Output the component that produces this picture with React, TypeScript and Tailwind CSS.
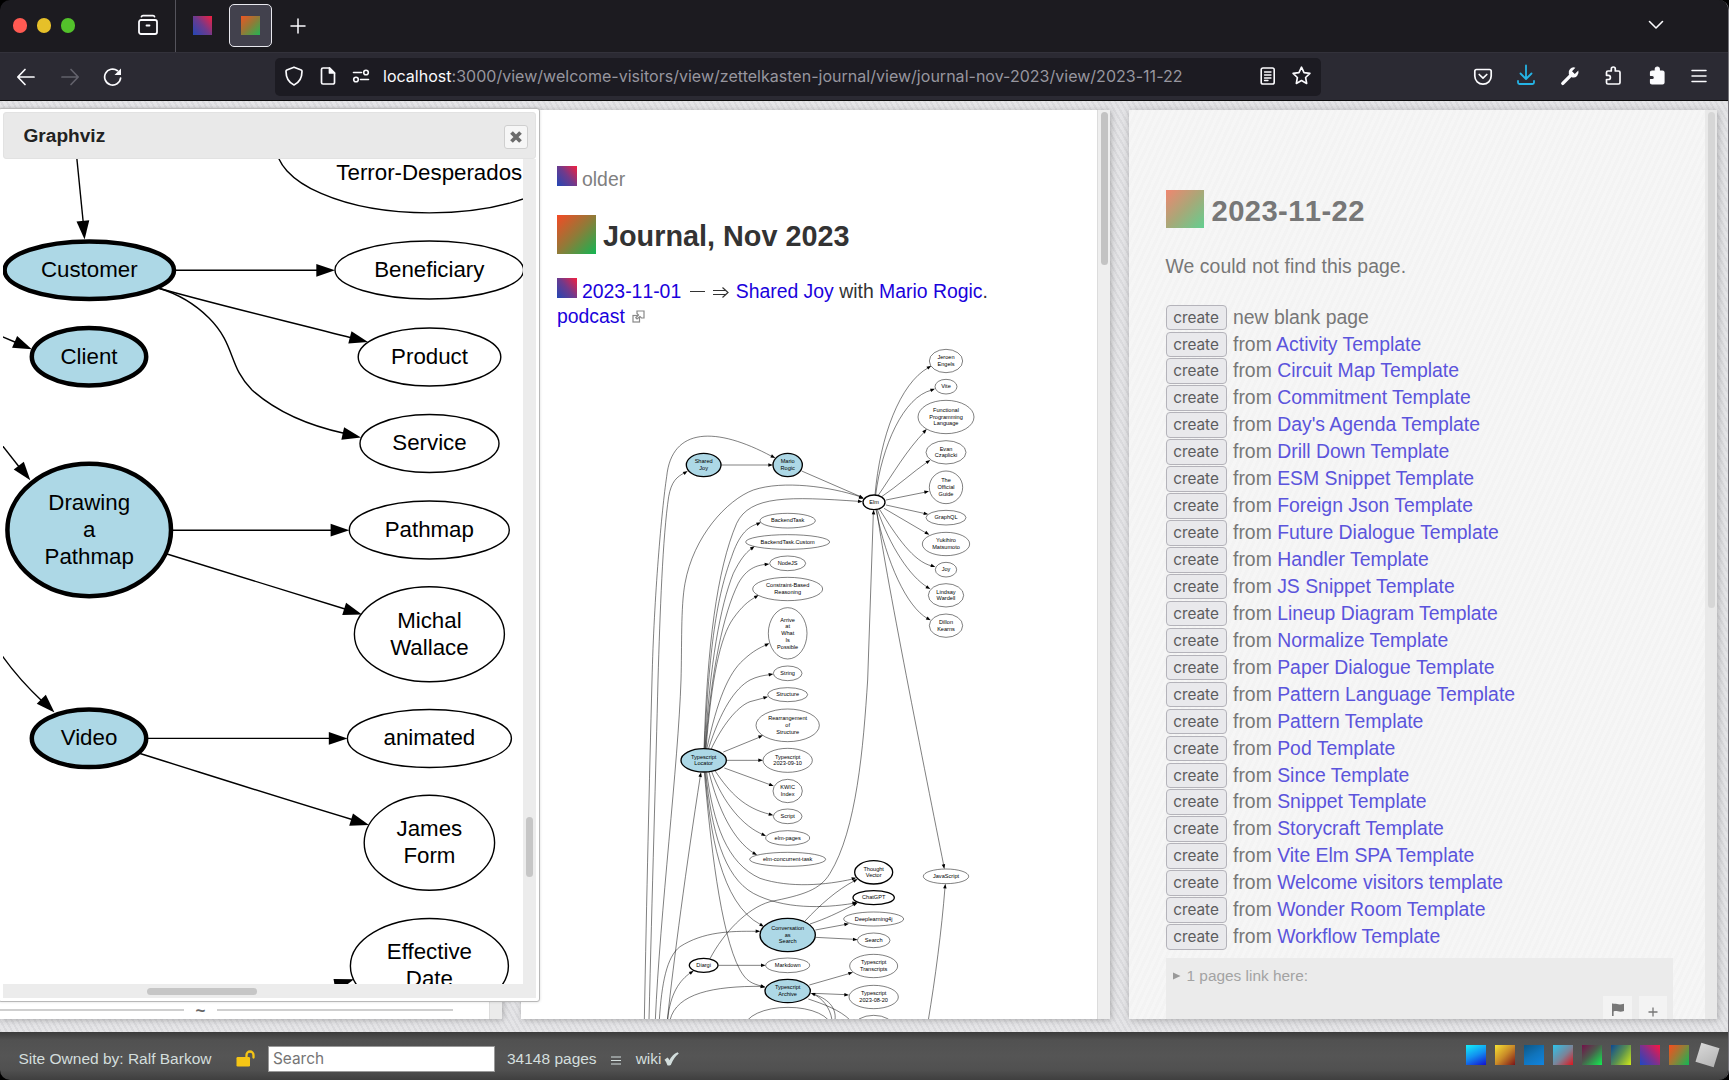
import React from "react";

const LINK = "text-[#1a02dc]";

type Pt = [number, number];

/* Arrow head polygon whose point is at `tip`, coming from the direction of `from`. */
function head(from: Pt, tip: Pt, len: number, half: number) {
  const dx = tip[0] - from[0];
  const dy = tip[1] - from[1];
  const m = Math.hypot(dx, dy) || 1;
  const ux = dx / m;
  const uy = dy / m;
  const bx = tip[0] - ux * len;
  const by = tip[1] - uy * len;
  return `${tip[0]},${tip[1]} ${bx - uy * half},${by + ux * half} ${bx + uy * half},${by - ux * half}`;
}

function Edge({ d, from, tip, len, half, w }: { d: string; from: Pt; tip: Pt; len: number; half: number; w: number }) {
  return (
    <g>
      <path d={d} fill="none" stroke="#000" strokeWidth={w} />
      <polygon points={head(from, tip, len, half)} fill="#000" />
    </g>
  );
}

type Node = { x: number; y: number; rx: number; ry: number; t: string; kind?: "blue" | "bold" };

function Nodes({ nodes, font, line, thin, thick }: { nodes: Node[]; font: number; line: number; thin: number; thick: number }) {
  return (
    <>
      {nodes.map((n, i) => {
        const lines = n.t.split("|");
        const first = n.y - ((lines.length - 1) * line) / 2 + font * 0.31;
        return (
          <g key={i}>
            <ellipse
              cx={n.x}
              cy={n.y}
              rx={n.rx}
              ry={n.ry}
              fill={n.kind === "blue" ? "#add8e6" : "#fff"}
              stroke="#000"
              strokeWidth={n.kind ? thick : thin}
            />
            {lines.map((l, k) => (
              <text key={k} x={n.x} y={first + k * line} textAnchor="middle" fontSize={font} fill="#000">
                {l}
              </text>
            ))}
          </g>
        );
      })}
    </>
  );
}

const bigNodes: Node[] = [
  { x: 429.3, y: 146.5, rx: 153, ry: 66.4, t: "||Terror-Desperados" },
  { x: 89.3, y: 270.2, rx: 84.7, ry: 28.8, t: "Customer", kind: "blue" },
  { x: 429.3, y: 270, rx: 94.3, ry: 29, t: "Beneficiary" },
  { x: 89, y: 356.7, rx: 57.2, ry: 28.8, t: "Client", kind: "blue" },
  { x: 429.5, y: 357, rx: 71.3, ry: 29, t: "Product" },
  { x: 429.5, y: 443.5, rx: 69.5, ry: 29, t: "Service" },
  { x: 89.2, y: 530, rx: 81.8, ry: 66.2, t: "Drawing|a|Pathmap", kind: "blue" },
  { x: 429.3, y: 530, rx: 80, ry: 29, t: "Pathmap" },
  { x: 429.4, y: 634.2, rx: 75, ry: 47.5, t: "Michal|Wallace" },
  { x: 89, y: 738.3, rx: 57.2, ry: 28.8, t: "Video", kind: "blue" },
  { x: 429.4, y: 738.5, rx: 82, ry: 29, t: "animated" },
  { x: 429.4, y: 842.8, rx: 65.2, ry: 47.5, t: "James|Form" },
  { x: 429.4, y: 966, rx: 79, ry: 47.5, t: "Effective|Date" },
];

const bigEdges: [string, Pt, Pt][] = [
  ["M76 150L83.2 222", [81, 200], [84.6, 239.5]],
  ["M172 270.3H318", [300, 270.3], [335, 270.3]],
  ["M158 288C210 303 290 322 352 338", [300, 324.5], [368, 342]],
  ["M158 288C182 295 199 308 209 318C236 345 228 366 252 390C280 415 315 427 345 433.5", [320, 428.5], [361, 437.5]],
  ["M2 336.5L16 342.5", [2, 336.5], [31.8, 349.3]],
  ["M2 445L20 468", [5, 448], [30.3, 480.3]],
  ["M170 530.2H333", [300, 530.2], [349.3, 530.2]],
  ["M167 554L345 609", [300, 595], [362, 614.5]],
  ["M2 655.5C15 674 28 688 43 702", [30, 688], [54.5, 712.5]],
  ["M146 738.4H331", [300, 738.4], [347.5, 738.4]],
  ["M140 753.5C215 777 290 801 352 819.5", [300, 804], [369, 825]],
];

function BigGraph() {
  return (
    <svg className="block shrink-0" width="520" height="826" viewBox="3 159 520 826" fontFamily="Liberation Sans, Arial, sans-serif">
      {bigEdges.map(([d, f, t], i) => (
        <Edge key={i} d={d} from={f} tip={t} len={18.7} half={6.4} w={1.4} />
      ))}
      <polygon points="333.5,979 354,979.3 336,993" fill="#000" />
      <Nodes nodes={bigNodes} font={22.3} line={27} thin={1.4} thick={4.5} />
    </svg>
  );
}

const smallNodes: Node[] = [
  { x: 948, y: 93, rx: 50, ry: 35, t: "Jeroen|Engels" },
  { x: 948, y: 170, rx: 33, ry: 22, t: "Vite" },
  { x: 948, y: 261, rx: 84, ry: 50, t: "Functional|Programming|Language" },
  { x: 948, y: 367, rx: 60, ry: 35, t: "Evan|Czaplicki" },
  { x: 948, y: 472, rx: 50, ry: 49, t: "The|Official|Guide" },
  { x: 948, y: 563, rx: 60, ry: 22, t: "GraphQL" },
  { x: 948, y: 642, rx: 71, ry: 35, t: "Yukihiro|Matsumoto" },
  { x: 948, y: 719, rx: 32, ry: 22, t: "Joy" },
  { x: 948, y: 796, rx: 53, ry: 35, t: "Lindsay|Wardell" },
  { x: 948, y: 887, rx: 50, ry: 35, t: "Dillon|Kearns" },
  { x: 732, y: 517, rx: 33, ry: 22, t: "Elm", kind: "bold" },
  { x: 221, y: 405, rx: 52, ry: 35, t: "Shared|Joy", kind: "blue" },
  { x: 473, y: 405, rx: 44, ry: 35, t: "Mario|Rogic", kind: "blue" },
  { x: 473, y: 572, rx: 83, ry: 22, t: "BackendTask" },
  { x: 473, y: 636, rx: 126, ry: 22, t: "BackendTask.Custom" },
  { x: 473, y: 700, rx: 54, ry: 22, t: "NodeJS" },
  { x: 473, y: 777, rx: 105, ry: 35, t: "Constraint-Based|Reasoning" },
  { x: 473, y: 910, rx: 58, ry: 77, t: "Arrive|at|What|Is|Possible" },
  { x: 473, y: 1030, rx: 43, ry: 22, t: "String" },
  { x: 473, y: 1094, rx: 60, ry: 21, t: "Structure" },
  { x: 473, y: 1186, rx: 95, ry: 49, t: "Rearrangement|of|Structure" },
  { x: 473, y: 1291, rx: 74, ry: 36, t: "Typescript|2023-09-10" },
  { x: 473, y: 1383, rx: 44, ry: 35, t: "KWIC|Index" },
  { x: 473, y: 1459, rx: 43, ry: 22, t: "Script" },
  { x: 473, y: 1524, rx: 66, ry: 22, t: "elm-pages" },
  { x: 473, y: 1588, rx: 114, ry: 21, t: "elm-concurrent-task" },
  { x: 221, y: 1291, rx: 68, ry: 35, t: "Typescript|Locator", kind: "blue" },
  { x: 731, y: 1627, rx: 57, ry: 35, t: "Thought|Vector", kind: "bold" },
  { x: 731, y: 1703, rx: 62, ry: 21, t: "ChatGPT", kind: "bold" },
  { x: 731, y: 1767, rx: 90, ry: 21, t: "Deeplearning4j" },
  { x: 731, y: 1831, rx: 49, ry: 22, t: "Search" },
  { x: 948, y: 1639, rx: 68, ry: 22, t: "JavaScript" },
  { x: 473, y: 1815, rx: 83, ry: 50, t: "Conversation|as|Search", kind: "blue" },
  { x: 221, y: 1906, rx: 43, ry: 21, t: "Diargi", kind: "bold" },
  { x: 473, y: 1906, rx: 66, ry: 22, t: "Markdown" },
  { x: 473, y: 1983, rx: 68, ry: 35, t: "Typescript|Archive", kind: "blue" },
  { x: 731, y: 1908, rx: 72, ry: 35, t: "Typescript|Transcripts" },
  { x: 731, y: 2001, rx: 74, ry: 35, t: "Typescript|2023-08-20" },
  { x: 474, y: 2092, rx: 130, ry: 60, t: "" },
  { x: 731, y: 2091, rx: 60, ry: 35, t: "" },
];

const smallEdges: [string, Pt, Pt][] = [
  ["M43 2070C50 1700 58 1350 66 1050C72 800 95 540 110 440C125 290 260 290 425 379", [400, 366], [436, 384]],
  ["M57 2070C66 1700 78 1300 84 1050C90 850 98 620 116 500C124 455 140 440 165 428", [150, 437], [173, 423]],
  ["M76 2070C90 1750 145 1300 153 1050C156 950 152 830 165 760C190 620 290 510 370 480C460 450 600 470 690 500", [660, 492], [701, 506]],
  ["M222 1258C232 950 260 720 320 580C360 495 480 500 686 514", [650, 511], [698, 515]],
  ["M223 1258C238 950 260 800 305 680C325 620 350 590 385 581", [370, 588], [393, 577]],
  ["M225 1258C240 1000 270 830 310 730C330 690 345 670 364 656", [350, 666], [374, 649]],
  ["M226 1258C244 1020 280 850 325 760C350 715 380 706 408 703", [390, 705], [418, 702]],
  ["M228 1258C244 1050 270 920 310 865C335 830 355 813 377 801", [360, 811], [386, 795]],
  ["M230 1258C262 1110 295 1030 340 990C370 962 390 953 410 944", [390, 954], [418, 940]],
  ["M235 1258C272 1140 315 1075 360 1050C380 1040 400 1036 420 1034", [400, 1037], [430, 1032]],
  ["M243 1258C275 1190 320 1130 360 1115L405 1103", [385, 1108], [414, 1100]],
  ["M280 1266L390 1221", [350, 1237], [399, 1216]],
  ["M290 1291H388", [350, 1291], [399, 1291]],
  ["M283 1314L420 1364", [380, 1349], [431, 1368]],
  ["M255 1322C300 1390 345 1435 420 1453", [395, 1446], [430, 1456]],
  ["M245 1325C280 1420 340 1490 400 1514", [380, 1505], [408, 1518]],
  ["M237 1326C265 1440 310 1530 372 1570", [355, 1560], [381, 1575]],
  ["M230 1327C250 1480 290 1600 390 1645C480 1675 590 1665 668 1647", [645, 1652], [679, 1643]],
  ["M227 1327C245 1500 280 1640 370 1690C460 1738 580 1735 670 1720", [645, 1724], [681, 1717]],
  ["M225 1327C240 1500 270 1720 392 1784", [372, 1772], [402, 1790]],
  ["M223 1327C240 1520 270 1810 330 1920C350 1955 365 1960 396 1969", [375, 1962], [406, 1972]],
  ["M112 2070C130 1900 170 1600 211 1338", [205, 1370], [213, 1327]],
  ["M88 2070C95 1960 110 1880 150 1850C220 1805 300 1803 380 1804", [350, 1803], [391, 1804]],
  ["M113 2070C120 1990 150 1950 182 1928", [165, 1940], [191, 1922]],
  ["M120 2070C140 1990 250 1968 396 1969", [360, 1967], [406, 1971]],
  ["M240 1886C280 1810 350 1735 420 1715C520 1695 570 1680 600 1630C680 1500 700 1250 713 1050L730 550", [729, 590], [731, 539]],
  ["M525 1773C570 1725 620 1680 674 1652", [655, 1662], [683, 1647]],
  ["M540 1782C590 1765 620 1750 672 1724", [650, 1734], [683, 1718]],
  ["M556 1800L648 1783", [600, 1792], [657, 1781]],
  ["M556 1822L674 1828", [600, 1824], [683, 1829]],
  ["M265 1906H398", [350, 1906], [407, 1906]],
  ["M538 1965L660 1930", [600, 1948], [669, 1927]],
  ["M550 1990L648 1994", [600, 1992], [657, 1995]],
  ["M615 2070C620 2030 590 2005 552 1993", [570, 2000], [542, 1989]],
  ["M740 538C760 700 890 1350 941 1605", [930, 1550], [943, 1617]],
  ["M895 2070C915 1950 935 1800 945 1672", [942, 1700], [946, 1661]],
  ["M515 423L692 500", [640, 477], [701, 505]],
  ["M273 405H418", [380, 405], [429, 405]],
  ["M735 495C750 320 810 160 895 113", [875, 125], [904, 107]],
  ["M737 495C755 350 820 200 906 180", [885, 187], [915, 176]],
  ["M744 497C790 430 830 360 884 305", [865, 325], [890, 297]],
  ["M755 500C800 470 850 425 892 396", [870, 411], [901, 390]],
  ["M768 510L888 486", [830, 497], [897, 484]],
  ["M768 525L886 551", [830, 539], [895, 553]],
  ["M762 535L890 610", [840, 580], [898, 614]],
  ["M748 537C800 620 850 695 906 708", [885, 700], [916, 711]],
  ["M742 538C780 650 840 740 893 772", [875, 762], [901, 777]],
  ["M738 539C770 700 830 830 893 866", [875, 855], [902, 871]],
];

function SmallGraph() {
  return (
    <svg className="ml-[109px] block" width="380" height="690" viewBox="0 0 1140 2070" fontFamily="Liberation Sans, Arial, sans-serif">
      {smallEdges.map(([d, f, t], i) => (
        <Edge key={i} d={d} from={f} tip={t} len={14} half={5.2} w={1.5} />
      ))}
      <path d="M535 2007C580 2022 630 2040 660 2070M606 2070C600 2030 575 2005 552 1993" fill="none" stroke="#000" strokeWidth="1.5" />
      <Nodes nodes={smallNodes} font={16.8} line={20.2} thin={1.5} thick={4} />
    </svg>
  );
}

function Gradient({ className }: { className: string }) {
  return <span className={`inline-block shrink-0 ${className}`} />;
}
const BLUE_RED = "bg-[linear-gradient(50deg,#2347b5,#6f3a8c_50%,#f41f3f)]";
const RED_GREEN = "bg-[linear-gradient(135deg,#f54a25,#8f7b38_50%,#12b653)]";

function TabStrip() {
  return (
    <div className="flex h-[52px] items-center bg-[#1c1b20] text-[#fbfbfe]">
      <div className="-mt-[2px] ml-[13px] flex gap-[10px]">
        <span className="h-[15px] w-[14px] rounded-full bg-[#ff5a52]" />
        <span className="h-[15px] w-[14px] rounded-full bg-[#e6c029]" />
        <span className="h-[15px] w-[14px] rounded-full bg-[#53c22b]" />
      </div>
      <svg className="-mt-[2px] ml-[62px]" width="22" height="22" viewBox="0 0 22 22" fill="none" stroke="currentColor" strokeWidth="1.8" strokeLinecap="round" strokeLinejoin="round">
        <path d="M4.5 2.6C4.7 1.8 5 1.6 6 1.6H16C17 1.6 17.300 1.800 17.500 2.600" />
        <rect x="2" y="6" width="18" height="14" rx="2" />
        <path d="M9.500 11.500H12.500" />
      </svg>
      <span className="ml-[16px] h-full w-px bg-[#55545c]" />
      <Gradient className={`-mt-[2px] ml-[17px] h-[19px] w-[19px] ${BLUE_RED}`} />
      <div className="-mt-[2px] ml-[17px] flex h-[43px] w-[43px] items-center justify-center rounded-[5px] border border-[#e8e8ee] bg-[#42414d]">
        <Gradient className="h-[19px] w-[19px] bg-[linear-gradient(135deg,#ee5522,#8f7b38_50%,#22b653)]" />
      </div>
      <svg className="ml-[18px]" width="16" height="16" viewBox="0 0 16 16" stroke="currentColor" strokeWidth="1.500" strokeLinecap="round">
        <path d="M8 1V15M1 8H15" />
      </svg>
      <svg className="-mt-[2px] mr-[64px] ml-auto" width="16" height="10" viewBox="0 0 16 10" fill="none" stroke="currentColor" strokeWidth="1.600" strokeLinecap="round" strokeLinejoin="round">
        <path d="M1.500 1.500L8 8L14.500 1.500" />
      </svg>
    </div>
  );
}

const PUZZLE = "M6 7H9.300V5A2 2 0 0 1 13.300 5V7H16.500A1.500 1.500 0 0 1 18 8.500V18.500A1.500 1.500 0 0 1 16.500 20H6A1.500 1.500 0 0 1 4.500 18.500V15.500H6.300A2 2 0 0 0 6.300 11.300H4.500V8.500A1.500 1.500 0 0 1 6 7Z";

function Toolbar() {
  return (
    <div className="flex h-12 items-center border-t border-[#33323b] bg-[#2b2a33] text-[#fbfbfe]">
      <svg className="ml-[16px]" width="20" height="20" viewBox="0 0 20 20" fill="none" stroke="currentColor" strokeWidth="1.700" strokeLinecap="round" strokeLinejoin="round">
        <path d="M18 10H2M9 2.500L1.800 10L9 17.500" />
      </svg>
      <svg className="ml-[24px] text-[#62616b]" width="20" height="20" viewBox="0 0 20 20" fill="none" stroke="currentColor" strokeWidth="1.700" strokeLinecap="round" strokeLinejoin="round">
        <path d="M2 10H18M11 2.500L18.200 10L11 17.500" />
      </svg>
      <svg className="ml-[23px]" width="20" height="20" viewBox="0 0 20 20" fill="none" stroke="currentColor" strokeWidth="1.700" strokeLinecap="round">
        <path d="M17.600 11A8 8 0 1 1 14.500 3.700" />
        <path d="M18 1.500V8H11.500Z" fill="currentColor" stroke="none" />
      </svg>
      <div className="ml-[152px] flex h-[38px] w-[1046px] shrink-0 items-center rounded-[5px] bg-[#1c1b22]">
        <svg className="-mt-[2px] ml-[9px] shrink-0" width="20" height="20" viewBox="0 0 20 20" fill="none" stroke="currentColor" strokeWidth="1.700" strokeLinejoin="round">
          <path d="M10 1.200L17.200 4Q18 4.300 18 5.300C18 12 15.500 16.500 10 19C4.500 16.500 2 12 2 5.300Q2 4.300 2.800 4Z" />
        </svg>
        <svg className="-mt-[2px] ml-[15px] shrink-0" width="18" height="20" viewBox="0 0 18 20" fill="none" stroke="currentColor" strokeWidth="1.700" strokeLinejoin="round">
          <path d="M4 2H10.500L15.500 7V16.500A1.500 1.500 0 0 1 14 18H4A1.500 1.500 0 0 1 2.500 16.500V3.500A1.500 1.500 0 0 1 4 2Z" />
          <path d="M10.500 2V7H15.500Z" fill="currentColor" />
        </svg>
        <svg className="-mt-[2px] ml-[15px] shrink-0" width="18" height="16" viewBox="0 0 18 16" fill="none" stroke="currentColor" strokeWidth="1.600" strokeLinecap="round">
          <path d="M1.500 4.500H9.500M8.500 11.500H16.500" />
          <circle cx="14" cy="4.500" r="2.300" />
          <circle cx="4" cy="11.500" r="2.300" />
        </svg>
        <span className="-mt-[2px] ml-[13px] font-['Inter',sans-serif] text-[16px] tracking-[0.020px] whitespace-nowrap text-[#97969f]">
          <span className="text-[#fbfbfe]">localhost</span>:3000/view/welcome-visitors/view/zettelkasten-journal/view/journal-nov-2023/view/2023-11-22
        </span>
        <svg className="-mt-[2px] ml-auto shrink-0" width="18" height="20" viewBox="0 0 18 20" fill="none" stroke="currentColor" strokeWidth="1.600" strokeLinecap="round">
          <rect x="2.200" y="2" width="13" height="16" rx="1.800" />
          <path d="M5.500 6H12M5.500 9H12M5.500 12H12M5.500 14.500H9" strokeWidth="1.300" />
        </svg>
        <svg className="-mt-[2px] mr-[9px] ml-[14px] shrink-0" width="21" height="21" viewBox="0 0 24 24" fill="none" stroke="currentColor" strokeWidth="1.900" strokeLinejoin="round">
          <path d="M12 2.500L14.900 8.700L21.600 9.600L16.700 14.300L17.900 21.100L12 17.800L6.100 21.100L7.300 14.300L2.400 9.600L9.100 8.700Z" />
        </svg>
      </div>
      <svg className="ml-[152px]" width="20" height="20" viewBox="0 0 20 20" fill="none" stroke="currentColor" strokeWidth="1.700" strokeLinecap="round" strokeLinejoin="round">
        <path d="M3.500 2.500H16.500Q18.200 2.500 18.200 4.200V9A8.200 8.200 0 0 1 1.800 9V4.200Q1.800 2.500 3.500 2.500Z" />
        <path d="M6.200 7.500L10 11.200L13.800 7.500" />
      </svg>
      <svg className="-mt-[3px] ml-[23px] text-[#25b4e6]" width="20" height="22" viewBox="0 0 20 22" fill="none" stroke="currentColor" strokeWidth="1.800" strokeLinecap="round" strokeLinejoin="round">
        <path d="M10 1.500V14.500M4.500 9.500L10 15L15.500 9.500M2 17V18.500Q2 20 3.500 20H16.500Q18 20 18 18.500V17" />
      </svg>
      <svg className="-mt-[2px] ml-[24px]" width="20" height="20" viewBox="0 0 20 20">
        <path d="M2.800 17.400L10.800 9.400" stroke="currentColor" strokeWidth="3.400" strokeLinecap="round" />
        <path d="M18.300 4.600L14.800 8L12 5.200L15.400 1.700A5.200 5.200 0 0 0 8.800 8.300L11.700 11.200A5.200 5.200 0 0 0 18.300 4.600Z" fill="currentColor" />
      </svg>
      <svg className="-mt-[4px] ml-[22px]" width="22" height="22" viewBox="0 0 22 22" fill="none" stroke="currentColor" strokeWidth="1.700" strokeLinejoin="round">
        <path d={PUZZLE} />
      </svg>
      <svg className="-mt-[4px] ml-[22px]" width="22" height="22" viewBox="0 0 22 22" fill="currentColor" stroke="currentColor" strokeWidth="1.200" strokeLinejoin="round">
        <path d={PUZZLE} />
      </svg>
      <svg className="-mt-[2px] ml-[23px]" width="16" height="14" viewBox="0 0 16 14" stroke="currentColor" strokeWidth="1.500" strokeLinecap="round">
        <path d="M1 1.500H15M1 7H15M1 12.500H15" />
      </svg>
    </div>
  );
}

function GraphvizDialog() {
  return (
    <div className="absolute top-[7px] left-[-2px] flex h-[894px] w-[542px] flex-col rounded-[3px] border border-[#b8b8b8] bg-white pt-[3px] pr-[3px] pb-[3px] pl-[4px] shadow-[0_0_3px_rgba(0,0,0,0.15)]">
      <div className="flex h-[47px] shrink-0 items-center justify-between rounded-[3px] border border-[#e2e2e2] bg-[#e9e9e9] pt-[2px] pr-[7px] pl-[19.500px]">
        <span className="text-[19.100px] font-bold text-[#222]">Graphviz</span>
        <span className="flex h-[24px] w-[24px] items-center justify-center rounded-[3px] border border-[#cfcfcf] bg-[#f6f6f6]">
          <svg width="12" height="12" viewBox="0 0 12 12" stroke="#6b6b6b" strokeWidth="3.800">
            <path d="M1.500 1.500L10.500 10.500M10.500 1.500L1.500 10.500" />
          </svg>
        </span>
      </div>
      <div className="flex h-[826px] overflow-hidden">
        <BigGraph />
        <div className="flex w-[14px] justify-center bg-[#ececec] pt-[658px]">
          <span className="h-[60px] w-[7px] rounded-full bg-[#c6c6c6]" />
        </div>
      </div>
      <div className="flex h-[14px] items-center bg-[#ececec] pl-[144px]">
        <span className="h-[7px] w-[110px] rounded-full bg-[#c6c6c6]" />
      </div>
    </div>
  );
}

function JournalPage() {
  return (
    <section className="flex h-[909px] w-[589px] overflow-hidden bg-white shadow-[1px_1px_6px_rgba(0,0,0,0.25)]">
      <div className="w-[576px] overflow-hidden pl-[36px] text-[19.400px] text-[#333]">
        <div className="mt-[55px] flex h-[27px] items-start">
          <Gradient className={`mt-px h-[20px] w-[20px] ${BLUE_RED}`} />
          <span className="ml-[5px] leading-[29px] text-[#808080]">older</span>
        </div>
        <div className="mt-[23px] flex h-[39px] items-start">
          <Gradient className={`h-[39px] w-[39px] ${RED_GREEN}`} />
          <h1 className="ml-[7px] text-[28.800px] leading-[43px] font-bold">Journal, Nov 2023</h1>
        </div>
        <div className="mt-[24px] flex h-[25px] items-start whitespace-pre">
          <Gradient className={`h-[20px] w-[20px] ${BLUE_RED}`} />
          <p className="ml-[5px] leading-[27px]">
            <a className={`[font-kerning:none] ${LINK}`}>2023-11-01</a>
            <span className="mr-[5px] ml-[6.500px] inline-block w-[19px] text-center">
              <span className="inline-block h-[1.500px] w-[15px] bg-[#333] align-[6px]" />
            </span>
            <svg className="mr-[6px] inline-block align-[-1px]" width="18" height="13" viewBox="0 0 18 13" fill="none" stroke="#333" strokeWidth="1.200">
              <path d="M1 4.500H13.500M1 8.500H13.500M10.500 1.500L16 6.500L10.500 11.500" />
            </svg>
            <a className={LINK}>Shared Joy</a> with <a className={LINK}>Mario Rogic</a>.
          </p>
        </div>
        <p className="flex h-[27px] items-center leading-[27px]">
          <a className={LINK}>podcast</a>
          <svg className="ml-[7px]" width="13" height="13" viewBox="0 0 13 13" fill="#fff" stroke="#888" strokeWidth="1.200">
            <rect x="1" y="5.500" width="6.500" height="6.500" />
            <path d="M5 1H12V8H9.500L8 6.500L5 9L3.800 7.800L6.500 5L5 3.500Z" />
          </svg>
        </p>
        <div className="-ml-[36px]">
          <SmallGraph />
        </div>
      </div>
      <div className="flex w-[13px] justify-center border-l border-[#dcdcdc] bg-[#eeeeee] pt-[2px]">
        <span className="h-[153px] w-[7px] rounded-full bg-[#c3c3c3]" />
      </div>
    </section>
  );
}

const templates = [
  "Activity Template",
  "Circuit Map Template",
  "Commitment Template",
  "Day's Agenda Template",
  "Drill Down Template",
  "ESM Snippet Template",
  "Foreign Json Template",
  "Future Dialogue Template",
  "Handler Template",
  "JS Snippet Template",
  "Lineup Diagram Template",
  "Normalize Template",
  "Paper Dialogue Template",
  "Pattern Language Template",
  "Pattern Template",
  "Pod Template",
  "Since Template",
  "Snippet Template",
  "Storycraft Template",
  "Vite Elm SPA Template",
  "Welcome visitors template",
  "Wonder Room Template",
  "Workflow Template",
];

function CreateRow({ children }: { children: React.ReactNode }) {
  return (
    <li className="flex h-[26.950px] items-start whitespace-pre">
      <button className="h-[25.500px] w-[61px] rounded-[4px] border border-[#b4b3ba] bg-[#e9e9ec] font-['Inter',sans-serif] text-[15.300px] leading-[24px] text-[#5c5c5e]">create</button>
      <span className="ml-[6.500px] leading-[25.600px]">{children}</span>
    </li>
  );
}

function GhostPage() {
  return (
    <section className="flex h-[909px] w-[588px] overflow-hidden bg-[#f4f4f4] bg-[repeating-linear-gradient(115deg,rgba(0,0,0,0.004)_0_3px,rgba(255,255,255,0.180)_3px_6px)] shadow-[1px_1px_7px_rgba(0,0,0,0.25)]">
      <div className="flex w-[576px] flex-col overflow-hidden pr-[32px] pl-[36.500px] text-[19.400px] text-[#777]">
        <div className="mt-[80px] flex h-[38px] shrink-0">
          <Gradient className="h-[38px] w-[38px] bg-[linear-gradient(135deg,#f08670,#a8a878_50%,#62cf90)]" />
          <h1 className="ml-[8px] text-[29.200px] leading-[42px] font-bold tracking-[0.400px] [font-kerning:none]">2023-11-22</h1>
        </div>
        <p className="mt-[25px] h-[27px] shrink-0 leading-[27px] tracking-[0.060px]">We could not find this page.</p>
        <ul className="mt-[24.600px] shrink-0">
          <CreateRow>new blank page</CreateRow>
          {templates.map((t) => (
            <CreateRow key={t}>
              from <a className="text-[#5b54dc]">{t}</a>
            </CreateRow>
          ))}
        </ul>
        <div className="mt-[7px] flex grow flex-col bg-[#ebebeb] text-[15.400px] text-[#a3a3a3]">
          <p className="mt-[6px] flex items-center pl-[7px] leading-[24px]">
            <svg className="mr-[6px]" width="8" height="8" viewBox="0 0 8 8" fill="#999">
              <path d="M0 0.500L7.500 4L0 7.500Z" />
            </svg>
            1 pages link here:
          </p>
          <div className="mt-[8px] flex grow justify-end gap-[7px] pr-[6px]">
            <span className="flex w-[29px] items-center justify-center bg-[#f3f3f3] pt-[4px]">
              <svg width="12" height="13" viewBox="0 0 12 13" fill="#777">
                <path d="M0 0.500H1.600V13H0ZM1.600 1C4 0 6 2.500 12 0.800V8C7 10 5 7 1.600 8.500Z" />
              </svg>
            </span>
            <span className="flex w-[28px] items-center justify-center bg-[#f3f3f3] pt-[8px]">
              <svg width="10" height="10" viewBox="0 0 10 10" stroke="#777" strokeWidth="1.300">
                <path d="M5 0.500V9.500M0.500 5H9.500" />
              </svg>
            </span>
          </div>
        </div>
      </div>
      <div className="flex w-[12px] justify-center bg-[#e9e9e9] pt-[2px]">
        <span className="h-[496px] w-[7px] rounded-full bg-[#d6d6d6]" />
      </div>
    </section>
  );
}

const neighbors = [
  "bg-[linear-gradient(155deg,#14f0f8,#1290f0_50%,#1410d0)]",
  "bg-[linear-gradient(135deg,#f6e234,#c98a28_50%,#7c1418)]",
  "bg-[linear-gradient(150deg,#0e5684,#1074bc_50%,#1184e0)]",
  "bg-[linear-gradient(135deg,#2cc4ec,#7d8296_55%,#e0141c)]",
  "bg-[linear-gradient(135deg,#74104a,#4a5c4c_45%,#12ee50)]",
  "bg-[linear-gradient(125deg,#0c4894,#5a9050_50%,#d2ea18)]",
  "bg-[linear-gradient(50deg,#1c48c4,#80308c_50%,#fc1440)]",
  "bg-[linear-gradient(125deg,#fa4c1c,#908038_50%,#10b854)]",
];

function Footer() {
  return (
    <footer className="flex h-[48px] items-center overflow-hidden bg-[linear-gradient(#3b3b3b,#515151_8px,#555_50%,#505050_38px,#3f3f3f)] text-[15.500px] text-[#d3dedd]">
      <span className="mt-[5px] ml-[18.500px] whitespace-nowrap">Site Owned by: Ralf Barkow</span>
      <svg className="mt-[5px] ml-[24.500px] text-[#f5c515]" width="19" height="17" viewBox="0 0 19 17">
        <rect x="0.500" y="7" width="13.500" height="9.500" rx="1.200" fill="currentColor" />
        <path d="M10.500 7.500V5A3.500 3.500 0 0 1 17.500 5V7.500" fill="none" stroke="currentColor" strokeWidth="2.300" strokeLinecap="round" />
      </svg>
      <div className="mt-[5px] ml-[13px] flex h-[26px] w-[227px] items-center border border-[#999] bg-white pl-[4px] font-['Inter',sans-serif] text-[15.400px] text-[#757575]">Search</div>
      <span className="mt-[5px] ml-[12px]">34148 pages</span>
      <svg className="mt-[8px] ml-[14px]" width="10" height="9" viewBox="0 0 10 9" stroke="currentColor" strokeWidth="1.200">
        <path d="M0 1H10M0 4.500H10M0 8H10" />
      </svg>
      <span className="mt-[5px] ml-[15px]">wiki</span>
      <svg className="mt-[5px] ml-[3px]" width="15" height="14" viewBox="0 0 15 14" fill="currentColor">
        <path d="M0.500 7.800L3.500 5.500Q4.900 6.800 5.400 8.200Q8.500 2.500 13.500 0.300L14.800 1.600Q9.800 5.500 6.800 13Q4.500 14 3.400 13.300Q2.500 10 0.500 7.800Z" />
      </svg>
      <div className="mr-[11px] mb-[2px] ml-auto flex items-center gap-[9px]">
        {neighbors.map((n) => (
          <span key={n} className={`h-[20px] w-[20px] ${n}`} />
        ))}
        <span className="h-[20px] w-[19px] rotate-[17deg] bg-[linear-gradient(135deg,#d8d8d8,#b4b4b4)]" />
      </div>
    </footer>
  );
}

export default function App() {
  return (
    <div className="h-[1080px] w-[1729px] overflow-hidden bg-black font-['Liberation_Sans',Arial,sans-serif]">
      <div className="flex h-full w-full flex-col overflow-hidden rounded-[10px] border-r border-[#77767c]">
        <TabStrip />
        <Toolbar />
        <main className="relative flex h-[932px] gap-[19px] overflow-hidden border-t border-[#0c0c0d] bg-[#dedee1] bg-[repeating-linear-gradient(60deg,rgba(0,0,0,0.020)_0_2px,rgba(255,255,255,0.200)_2px_5px)] pt-[9px]">
          <section className="flex h-[909px] w-[502px] shrink-0 items-end bg-white shadow-[1px_1px_6px_rgba(0,0,0,0.25)]">
            <div className="flex h-[18px] w-[489px] items-center">
              <span className="h-[2px] w-[184px] bg-[#cfcfcf]" />
              <span className="w-[33px] text-center text-[17px] leading-none font-bold text-[#666]">~</span>
              <span className="h-[2px] w-[236px] bg-[#cfcfcf]" />
            </div>
            <div className="h-full w-[13px] border-l border-[#ddd] bg-[#ebebeb]" />
          </section>
          <JournalPage />
          <GhostPage />
          <GraphvizDialog />
        </main>
        <Footer />
      </div>
    </div>
  );
}
